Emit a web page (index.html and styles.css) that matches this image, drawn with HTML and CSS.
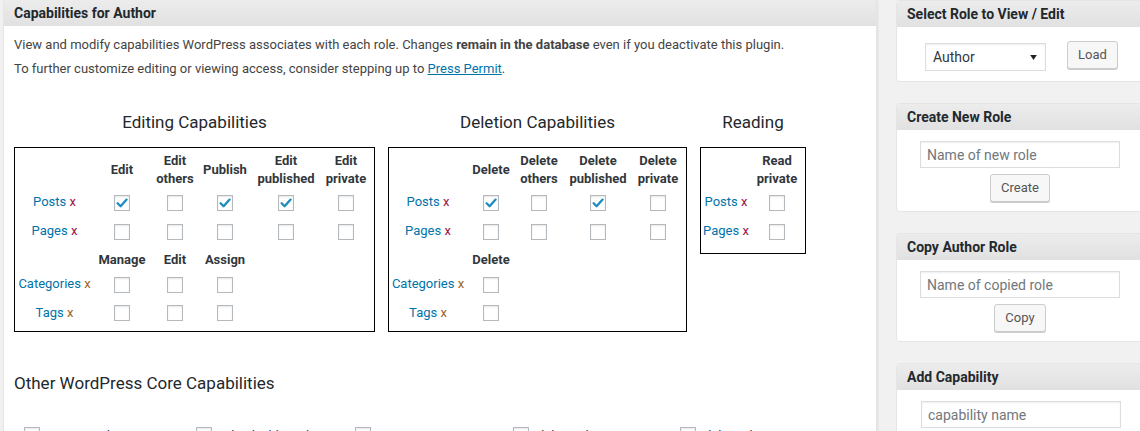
FILE: index.html
```html
<!DOCTYPE html>
<html>
<head>
<meta charset="utf-8">
<link rel="stylesheet" href="styles.css">
</head>
<body>
<div class="wrap">
  <div class="main">
    <div class="hd">Capabilities for Author</div>
    <div class="main-body">
      <p class="intro">View and modify capabilities WordPress associates with each role. Changes <strong>remain in the database</strong> even if you deactivate this plugin.</p>
      <p class="intro">To further customize editing or viewing access, consider stepping up to <a class="link" href="#">Press Permit</a>.</p>

      <div class="groups">
        <div class="group">
          <h3 class="gtitle">Editing Capabilities</h3>
          <div class="cap cap-edit">
            <div class="c"></div>
            <div class="c h">Edit</div>
            <div class="c h">Edit<br>others</div>
            <div class="c h">Publish</div>
            <div class="c h">Edit<br>published</div>
            <div class="c h">Edit<br>private</div>

            <div class="c lbl">Posts&nbsp;<span class="x">x</span></div>
            <div class="c"><span class="cb on"><svg viewBox="0 0 16 16"><path d="M3.6 8.2 L6.6 11.2 L12.6 4.6"/></svg></span></div>
            <div class="c"><span class="cb"></span></div>
            <div class="c"><span class="cb on"><svg viewBox="0 0 16 16"><path d="M3.6 8.2 L6.6 11.2 L12.6 4.6"/></svg></span></div>
            <div class="c"><span class="cb on"><svg viewBox="0 0 16 16"><path d="M3.6 8.2 L6.6 11.2 L12.6 4.6"/></svg></span></div>
            <div class="c"><span class="cb"></span></div>

            <div class="c lbl">Pages&nbsp;<span class="x">x</span></div>
            <div class="c"><span class="cb"></span></div>
            <div class="c"><span class="cb"></span></div>
            <div class="c"><span class="cb"></span></div>
            <div class="c"><span class="cb"></span></div>
            <div class="c"><span class="cb"></span></div>

            <div class="c"></div>
            <div class="c h h2">Manage</div>
            <div class="c h h2">Edit</div>
            <div class="c h h2">Assign</div>
            <div class="c"></div>
            <div class="c"></div>

            <div class="c lbl">Categories&nbsp;<span class="x tx">x</span></div>
            <div class="c"><span class="cb"></span></div>
            <div class="c"><span class="cb"></span></div>
            <div class="c"><span class="cb"></span></div>
            <div class="c"></div>
            <div class="c"></div>

            <div class="c lbl">Tags&nbsp;<span class="x tx">x</span></div>
            <div class="c"><span class="cb"></span></div>
            <div class="c"><span class="cb"></span></div>
            <div class="c"><span class="cb"></span></div>
            <div class="c"></div>
            <div class="c"></div>
          </div>
        </div>

        <div class="group">
          <h3 class="gtitle">Deletion Capabilities</h3>
          <div class="cap cap-del">
            <div class="c"></div>
            <div class="c h">Delete</div>
            <div class="c h">Delete<br>others</div>
            <div class="c h">Delete<br>published</div>
            <div class="c h">Delete<br>private</div>

            <div class="c lbl">Posts&nbsp;<span class="x">x</span></div>
            <div class="c"><span class="cb on"><svg viewBox="0 0 16 16"><path d="M3.6 8.2 L6.6 11.2 L12.6 4.6"/></svg></span></div>
            <div class="c"><span class="cb"></span></div>
            <div class="c"><span class="cb on"><svg viewBox="0 0 16 16"><path d="M3.6 8.2 L6.6 11.2 L12.6 4.6"/></svg></span></div>
            <div class="c"><span class="cb"></span></div>

            <div class="c lbl">Pages&nbsp;<span class="x">x</span></div>
            <div class="c"><span class="cb"></span></div>
            <div class="c"><span class="cb"></span></div>
            <div class="c"><span class="cb"></span></div>
            <div class="c"><span class="cb"></span></div>

            <div class="c"></div>
            <div class="c h h2">Delete</div>
            <div class="c"></div>
            <div class="c"></div>
            <div class="c"></div>

            <div class="c lbl">Categories&nbsp;<span class="x tx">x</span></div>
            <div class="c"><span class="cb"></span></div>
            <div class="c"></div>
            <div class="c"></div>
            <div class="c"></div>

            <div class="c lbl">Tags&nbsp;<span class="x tx">x</span></div>
            <div class="c"><span class="cb"></span></div>
            <div class="c"></div>
            <div class="c"></div>
            <div class="c"></div>
          </div>
        </div>

        <div class="group">
          <h3 class="gtitle">Reading</h3>
          <div class="cap cap-read">
            <div class="c"></div>
            <div class="c h">Read<br>private</div>

            <div class="c lbl">Posts&nbsp;<span class="x">x</span></div>
            <div class="c"><span class="cb"></span></div>

            <div class="c lbl">Pages&nbsp;<span class="x">x</span></div>
            <div class="c"><span class="cb"></span></div>
          </div>
        </div>
      </div>

      <h3 class="other">Other WordPress Core Capabilities</h3>
      <div class="core">
        <div class="core-item"><span class="cb"></span><span class="core-lbl">activate_plugins</span></div>
        <div class="core-item"><span class="cb"></span><span class="core-lbl">edit_dashboard</span></div>
        <div class="core-item"><span class="cb"></span><span class="core-lbl">create_users</span></div>
        <div class="core-item"><span class="cb"></span><span class="core-lbl">delete_plugins</span></div>
        <div class="core-item"><span class="cb"></span><span class="core-lbl">delete_themes</span></div>
      </div>
    </div>
  </div>

  <div class="side">
    <div class="box">
      <div class="box-hd">Select Role to View / Edit</div>
      <div class="box-body row">
        <div class="select"><span>Author</span><svg class="arrow" viewBox="0 0 8 6"><path d="M0 0 H8 L4 6 Z"/></svg></div>
        <button class="btn btn-load">Load</button>
      </div>
    </div>
    <div class="box">
      <div class="box-hd">Create New Role</div>
      <div class="box-body col">
        <input class="inp" type="text" placeholder="Name of new role">
        <button class="btn btn-create">Create</button>
      </div>
    </div>
    <div class="box">
      <div class="box-hd">Copy Author Role</div>
      <div class="box-body col">
        <input class="inp" type="text" placeholder="Name of copied role">
        <button class="btn btn-copy">Copy</button>
      </div>
    </div>
    <div class="box">
      <div class="box-hd">Add Capability</div>
      <div class="box-body col">
        <input class="inp inp-cap" type="text" placeholder="capability name">
        <button class="btn">Add to Author</button>
      </div>
    </div>
  </div>
</div>
</body>
</html>
```

FILE: styles.css
```css
* { box-sizing: border-box; }
html, body { margin: 0; padding: 0; overflow: hidden; }
body {
  width: 1140px;
  height: 431px;
  background: #f1f1f1;
  font-family: Roboto, "Liberation Sans", Arial, sans-serif;
  font-size: 13px;
  color: #444;
}
.wrap {
  display: flex;
  align-items: flex-start;
  gap: 19px;
  padding-left: 3px;
}

/* main panel */
.main {
  flex: none;
  width: 874px;
  background: #fff;
  border: 1px solid #e5e5e5;
  border-top: 0;
  box-shadow: 1px 1px 2px rgba(0,0,0,0.08);
}
.hd {
  height: 26px;
  line-height: 26px;
  padding-left: 10px;
  font-size: 14px;
  font-weight: 700;
  color: #23282d;
  background: linear-gradient(#ececec, #e1e1e1);
}
.main-body {
  padding: 7px 10px 40px;
}
.intro {
  margin: 0;
  line-height: 24px;
}
.intro strong { font-weight: 700; }
.link { color: #0073aa; text-decoration: underline; }

.groups {
  display: flex;
  align-items: flex-start;
  gap: 13px;
  margin-top: 29px;
}
.gtitle {
  margin: 0 0 13px;
  font-size: 17px;
  line-height: 24px;
  font-weight: 400;
  color: #23282d;
  text-align: center;
}
.cap {
  display: grid;
  border: 1px solid #000;
}
.cap-edit {
  grid-template-columns: 79px 56px 50px 50px 72px 48px;
  grid-template-rows: 40px 29px 29px 26px 25px 32px;
  padding: 0 4px 2px 0;
}
.cap-del {
  grid-template-columns: 78px 48px 48px 70px 50px;
  grid-template-rows: 40px 29px 29px 26px 25px 32px;
  padding: 0 3px 2px 0;
}
.cap-read {
  grid-template-columns: 50px 52px;
  grid-template-rows: 40px 29px 29px;
  padding: 0 2px 7px 0;
}
.c {
  display: flex;
  align-items: center;
  justify-content: center;
  text-align: center;
  white-space: nowrap;
}
.h {
  font-weight: 700;
  line-height: 18px;
  color: #32373c;
  padding-top: 4px;
}
.h2 { padding-top: 2px; }
.lbl {
  color: #0073aa;
  padding-bottom: 2px;
}
.x { color: #9c1048; }
.x.tx { color: #a0621c; }

.cb {
  display: inline-block;
  width: 16px;
  height: 16px;
  border: 1px solid #b4b9be;
  background: #fff;
  box-shadow: inset 0 1px 2px rgba(0,0,0,0.1);
  flex: none;
  position: relative;
}
.cb svg {
  position: absolute;
  left: -1px;
  top: -1px;
  width: 16px;
  height: 16px;
}
.cb svg path {
  fill: none;
  stroke: #1e8cbe;
  stroke-width: 2.3;
  stroke-linecap: round;
  stroke-linejoin: round;
}

.other {
  margin: 39px 0 32px;
  font-size: 17px;
  line-height: 24px;
  font-weight: 400;
  color: #23282d;
}
.core {
  display: grid;
  grid-template-columns: 172px 159px 158px 167px 180px;
  padding-left: 10px;
}
.core-item {
  display: flex;
  align-items: flex-start;
  gap: 8px;
  line-height: 16px;
}
.core-lbl {
  color: #32373c;
  padding-top: 1px;
}

/* sidebar */
.side {
  flex: none;
  width: 248px;
  display: flex;
  flex-direction: column;
  gap: 21px;
}
.box {
  background: #fff;
  border: 1px solid #e5e5e5;
  border-radius: 4px;
  overflow: hidden;
}
.box-hd {
  height: 26px;
  line-height: 26px;
  padding-left: 10px;
  font-size: 14px;
  font-weight: 700;
  color: #23282d;
  background: linear-gradient(#ececec, #e1e1e1);
}
.box-body.row {
  display: flex;
  align-items: flex-start;
  gap: 21px;
  padding: 14px 0 10px 28px;
}
.box-body.col {
  display: flex;
  flex-direction: column;
  align-items: center;
  gap: 6px;
  padding: 11px 0 9px;
}
.select {
  margin-top: 2px;
  width: 121px;
  height: 28px;
  border: 1px solid #ddd;
  box-shadow: inset 0 1px 2px rgba(0,0,0,0.07);
  display: flex;
  align-items: center;
  justify-content: space-between;
  padding: 0 8px 0 7px;
  font-size: 14px;
  color: #32373c;
}
.arrow { width: 7px; height: 5px; fill: #222; }
.btn {
  height: 28px;
  padding: 0 10px;
  border: 1px solid #ccc;
  border-radius: 3px;
  background: #f7f7f7;
  box-shadow: 0 1px 0 #ccc;
  color: #555;
  font-family: inherit;
  font-size: 13px;
  line-height: 26px;
}
.btn-load { width: 51px; padding: 0; }
.btn-create { width: 60px; padding: 0; }
.btn-copy { width: 52px; padding: 0; }
.inp {
  width: 200px;
  height: 27px;
  border: 1px solid #ddd;
  box-shadow: inset 0 1px 2px rgba(0,0,0,0.07);
  padding: 0 6px;
  font-family: inherit;
  font-size: 14px;
  color: #32373c;
  background: #fff;
  outline: none;
}
.inp::placeholder { color: #72777c; }
.inp-cap { margin-left: 2px; }
```
